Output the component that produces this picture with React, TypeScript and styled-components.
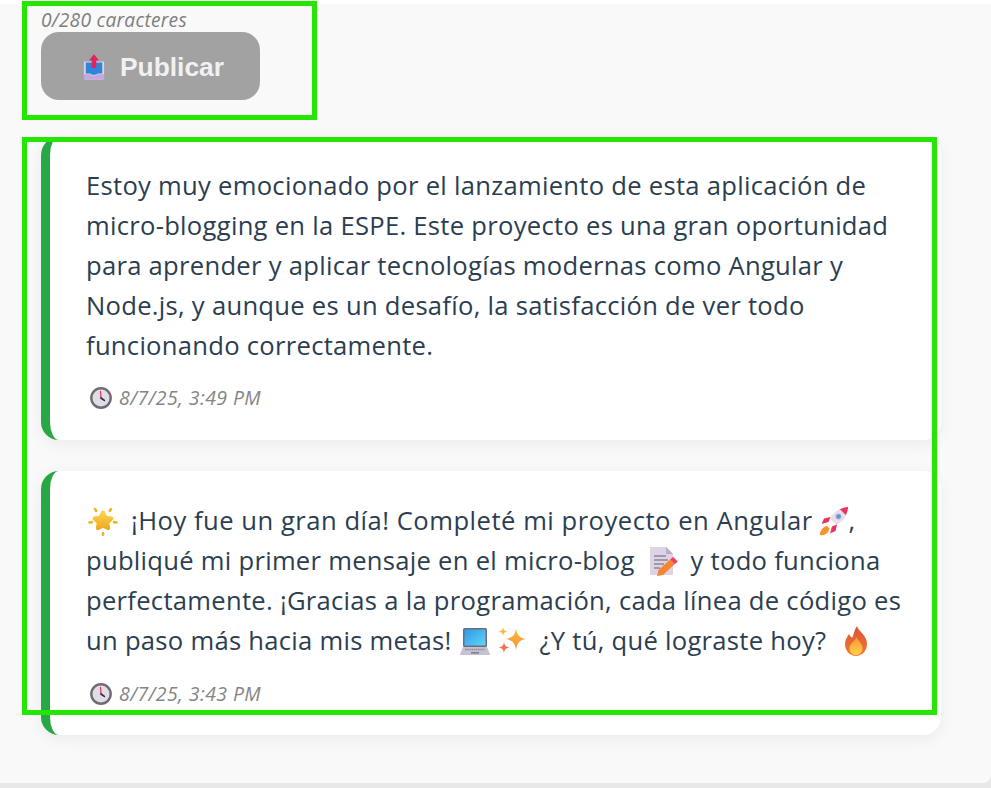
import React from 'react';
import styled, { createGlobalStyle } from 'styled-components';

const GlobalStyle = createGlobalStyle`
  html, body {
    margin: 0;
    padding: 0;
    background: #ffffff;
  }
  body {
    font-family: "Open Sans", "Noto Sans", "Liberation Sans", sans-serif;
    overflow: hidden;
  }
`;

const Page = styled.div`
  position: relative;
  width: 991px;
  height: 788px;
  padding-top: 4px;
  box-sizing: border-box;
  overflow: hidden;
  background: linear-gradient(#ffffff 50%, #e8e8e8 50%);
`;

const Panel = styled.main`
  box-sizing: border-box;
  height: 779px;
  padding: 4px 50px 0 41px;
  background: #f9f9f9;
  border-radius: 0 0 8px 0;
`;

const Composer = styled.section`
  display: flex;
  flex-direction: column;
  align-items: flex-start;
`;

const Counter = styled.small`
  font-size: 19.2px;
  line-height: 24px;
  font-style: italic;
  letter-spacing: 0.25px;
  color: #7f7f7f;
`;

const PublishButton = styled.button`
  display: flex;
  align-items: center;
  justify-content: center;
  gap: 15px;
  width: 219px;
  height: 68px;
  padding: 2px 0 0 6px;
  border: 0;
  border-radius: 18px;
  background: #a2a2a2;
  color: #f1f1f1;
  font-family: "Liberation Sans", Arial, sans-serif;
  font-size: 26.4px;
  font-weight: 700;
`;

const Feed = styled.section`
  display: flex;
  flex-direction: column;
  gap: 31px;
  margin-top: 37px;
`;

const Post = styled.article<{ $emoji?: boolean }>`
  box-sizing: border-box;
  padding: ${p => (p.$emoji ? '30px 36px 26px' : '29px 36px 27px')};
  background: #ffffff;
  border-left: 9px solid #28a745;
  border-radius: 18px;
  box-shadow: 0 4px 16px rgba(0, 0, 0, 0.06);
`;

const PostText = styled.p`
  margin: 0;
  font-size: 25.6px;
  line-height: 40px;
  letter-spacing: 0.28px;
  color: #2c3e50;
`;

const Lead = styled.span`
  letter-spacing: 0.51px;
`;

const PostDate = styled.div<{ $emoji?: boolean }>`
  display: flex;
  align-items: center;
  gap: 7px;
  margin-top: ${p => (p.$emoji ? 18 : 17)}px;
  padding-left: 4px;
  font-size: 19.5px;
  line-height: 30px;
  font-style: italic;
  letter-spacing: 0.4px;
  color: #858585;
`;

const Frame = styled.div<{ $left: number; $top: number; $width: number; $height: number }>`
  position: absolute;
  left: ${p => p.$left}px;
  top: ${p => p.$top}px;
  width: ${p => p.$width}px;
  height: ${p => p.$height}px;
  box-sizing: border-box;
  border: 5px solid #24e600;
  pointer-events: none;
`;

const Emoji = styled.svg<{ $before: number; $after: number }>`
  display: inline-block;
  width: 30px;
  height: 30px;
  margin: 0 ${p => p.$after}px 0 ${p => p.$before}px;
  vertical-align: -6px;
`;

const ClockIcon = styled.svg`
  width: 22px;
  height: 22px;
  flex: none;
`;

const OutboxIcon = styled.svg`
  width: 22px;
  height: 26px;
  flex: none;
`;

const Star = () => (
  <Emoji viewBox="0 0 30 30" $before={2} $after={6}>
    <defs>
      <linearGradient id="starFill" x1="0" y1="0" x2="0" y2="1">
        <stop offset="0" stopColor="#fbd24a" />
        <stop offset="1" stopColor="#eeab25" />
      </linearGradient>
    </defs>
    <path d="M15 6.500l2.600 5.200 5.800.8-4.200 4 1 5.700-5.200-2.700-5.200 2.700 1-5.700-4.200-4 5.800-.8z" fill="url(#starFill)" stroke="url(#starFill)" strokeWidth="4" strokeLinejoin="round" />
    <path d="M7 3l1.200 2M23 3l-1.200 2M1.500 16.500l2.500-.4M28.500 16.500l-2.500-.4M15 27v1.800" stroke="#efb32c" strokeWidth="2.600" strokeLinecap="round" />
  </Emoji>
);

const Rocket = () => (
  <Emoji viewBox="0 0 30 30" $before={-1} $after={0}>
    <path d="M29 1c-8 .5-14 4.500-18 11.500l6.500 6.500C24.500 15 28.500 9 29 1z" fill="#e9dde8" />
    <path d="M29 1c-3 .2-5.600 1-8 2.200l5.800 5.800C28 6.600 28.800 4 29 1z" fill="#f0305f" />
    <circle cx="19.500" cy="10.500" r="3.100" fill="#c8bfd4" />
    <circle cx="19.500" cy="10.500" r="2.200" fill="#4f9be8" />
    <path d="M11.500 11L5 12.500l-2.500 5.500 7-2zM18 18.500L16.500 25 11 27.500l2-7z" fill="#f0305f" />
    <path d="M8 20c-3.500.5-6 3-7.500 8.500 1.500 1 3 1 4.500.5 3-1 5-3.500 5.500-6.500z" fill="#f7962d" />
  </Emoji>
);

const Memo = () => (
  <Emoji viewBox="0 0 30 30" $before={6} $after={6}>
    <path d="M2 1h16l7 7v20a1 1 0 0 1-1 1H3a1 1 0 0 1-1-1z" fill="#ddd3e4" />
    <path d="M18 1l7 7h-7z" fill="#b8adc4" />
    <path d="M6 10h12M6 14h14M6 18h10M6 22h6" stroke="#8d8597" strokeWidth="1.500" />
    <path d="M25 11l4.500 4.500L15 29l-6 1 1.500-6z" fill="#f58434" />
    <path d="M25 11l4.500 4.500-2.500 2.500-4.500-4.500z" fill="#ef3d6a" />
  </Emoji>
);

const Laptop = () => (
  <Emoji viewBox="0 0 30 30" $before={1} $after={3}>
    <defs>
      <linearGradient id="screenFill" x1="0" y1="0" x2="1" y2="1">
        <stop offset="0" stopColor="#2c9be8" />
        <stop offset="1" stopColor="#63d4f5" />
      </linearGradient>
    </defs>
    <rect x="3" y="2" width="24" height="19" rx="1.500" fill="#6a6c83" />
    <rect x="4.500" y="3.500" width="21" height="16" fill="url(#screenFill)" />
    <path d="M3 21h24l3 7a1 1 0 0 1-1 1H1a1 1 0 0 1-1-1z" fill="#c6c2d2" />
    <path d="M5 23.500h20" stroke="#8f8ca0" strokeWidth="1.500" strokeDasharray="1.500 .7" />
    <path d="M11 26.800h8" stroke="#77748a" strokeWidth="1.400" />
  </Emoji>
);

const Sparkles = () => (
  <Emoji viewBox="0 0 30 30" $before={-3} $after={6}>
    <defs>
      <linearGradient id="sparkFill" x1="0" y1="0" x2="0" y2="1">
        <stop offset="0" stopColor="#fbc344" />
        <stop offset="1" stopColor="#f58c32" />
      </linearGradient>
    </defs>
    <path d="M19 2c1 7 3 9.500 10 11-7 1.500-9 4-10 11-1-7-3-9.500-10-11 7-1.500 9-4 10-11z" fill="url(#sparkFill)" />
    <path d="M6 1c.5 3 1.500 4 4.500 4.500C7.500 6 6.500 7 6 10c-.5-3-1.500-4-4.500-4.500C4.500 5 5.500 4 6 1z" fill="#f9b93f" />
    <path d="M7 16c.6 3.600 1.800 4.800 5.500 5.500C8.800 22.200 7.600 23.400 7 27c-.6-3.600-1.800-4.800-5.500-5.500C5.200 20.800 6.400 19.600 7 16z" fill="#f46f4a" />
  </Emoji>
);

const Fire = () => (
  <Emoji viewBox="0 0 30 30" $before={8} $after={0}>
    <defs>
      <linearGradient id="fireFill" x1="0" y1="0" x2="0" y2="1">
        <stop offset="0" stopColor="#d9543a" />
        <stop offset="1" stopColor="#f57a2e" />
      </linearGradient>
      <linearGradient id="fireCore" x1="0" y1="0" x2="0" y2="1">
        <stop offset="0" stopColor="#f9932f" />
        <stop offset="1" stopColor="#fdd34f" />
      </linearGradient>
    </defs>
    <path d="M16 0c1 5 10 9 10 18 0 7-5 12-11 12S4 25 4 18c0-4 2-7 4-10 1 2 2 3.500 3.500 3.500C13 8 13 4 16 0z" fill="url(#fireFill)" />
    <path d="M15.500 11c1 3.500 6 6 6 11.500 0 4-3 6.500-6.500 6.500s-6.500-2.500-6.500-6.500c0-5 5.500-7 7-11.500z" fill="url(#fireCore)" />
  </Emoji>
);

const Clock = () => (
  <ClockIcon viewBox="0 0 22 22">
    <circle cx="11" cy="11" r="9.700" fill="#e0dde6" stroke="#6e6c70" strokeWidth="2.400" />
    <path d="M10.500 4.500l.5 6.500" stroke="#e5365e" strokeWidth="1.300" strokeLinecap="round" />
    <path d="M11 11l3.300 2.400" stroke="#2e2b45" strokeWidth="1.700" strokeLinecap="round" />
  </ClockIcon>
);

const Outbox = () => (
  <OutboxIcon viewBox="0 0 24 28">
    <path d="M1 8h22v18a2 2 0 0 1-2 2H3a2 2 0 0 1-2-2z" fill="#dcd2e8" />
    <path d="M1 22h7c1 2 7 2 8 0h7v4a2 2 0 0 1-2 2H3a2 2 0 0 1-2-2z" fill="#c5a9da" />
    <path d="M3 9h18v12h-5c-1 2-7 2-8 0H3z" fill="#2f86d9" />
    <path d="M12 0l5.500 7h-3v8h-5V7h-3z" fill="#e0245e" />
  </OutboxIcon>
);

export default function App() {
  return (
    <Page>
      <GlobalStyle />
      <Panel>
        <Composer>
          <Counter>0/280 caracteres</Counter>
          <PublishButton>
            <Outbox />
            Publicar
          </PublishButton>
        </Composer>
        <Feed>
          <Post>
            <PostText>
              Estoy muy emocionado por el lanzamiento de esta aplicación de micro-blogging en la ESPE. Este proyecto es una gran oportunidad para aprender y aplicar tecnologías modernas como Angular y Node.js, y aunque es un desafío, la satisfacción de ver todo funcionando correctamente.
            </PostText>
            <PostDate>
              <Clock />
              8/7/25, 3:49 PM
            </PostDate>
          </Post>
          <Post $emoji>
            <PostText>
              <Star /> <Lead>¡Hoy fue un gran día! Completé mi proyecto en Angular</Lead> <Rocket />, publiqué mi primer mensaje en el micro-blog <Memo /> y todo funciona perfectamente. ¡Gracias a la programación, cada línea de código es un paso más hacia mis metas! <Laptop /> <Sparkles /> ¿Y tú, qué lograste hoy? <Fire />
            </PostText>
            <PostDate $emoji>
              <Clock />
              8/7/25, 3:43 PM
            </PostDate>
          </Post>
        </Feed>
      </Panel>
      <Frame $left={22} $top={1} $width={295} $height={119} />
      <Frame $left={22} $top={137} $width={915} $height={578} />
    </Page>
  );
}
